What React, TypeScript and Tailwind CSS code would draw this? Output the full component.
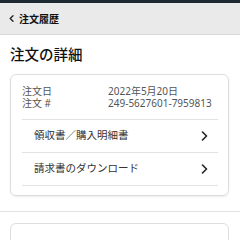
import React from "react";

function ChevronRight() {
  return (
    <svg width="7" height="10" viewBox="0 0 7 10" fill="none">
      <path d="M1.5 1 L5.5 5 L1.5 9" stroke="#222" strokeWidth="1.6" strokeLinecap="round" strokeLinejoin="round" />
    </svg>
  );
}

export default function App() {
  return (
    <div
      className="w-[240px] h-[240px] overflow-hidden bg-white"
      style={{ fontFamily: '"Noto Sans", "Noto Sans CJK JP", sans-serif' }}
    >
      <div className="h-[3px] bg-[#1f2b33]" />
      <div className="h-[32px] bg-[#eaeaea] border-b border-[#d8d8d8] flex items-center pl-[9px] gap-[5px]">
        <svg width="5" height="7" viewBox="0 0 5 7" fill="none">
          <path d="M4 0.8 L1.2 3.5 L4 6.2" stroke="#222" strokeWidth="1.3" strokeLinecap="round" strokeLinejoin="round" />
        </svg>
        <span className="text-[10px] font-bold text-[#111] leading-none">注文履歴</span>
      </div>

      <h1 className="pt-[9px] pl-[10px] text-[14.5px] leading-[20px] font-medium text-[#111]">注文の詳細</h1>

      <div className="mt-[10px] ml-[10px] w-[219px] rounded-[6px] border border-[#dddddd] shadow-[0_1px_2px_rgba(0,0,0,0.08)] pt-[10px] pb-[9px] pl-[11px] pr-[10px]">
        <div className="grid grid-cols-[86px_1fr] text-[10px] leading-[12px] text-[#555]">
          <span>注文日</span>
          <span>2022年5月20日</span>
          <span>注文 #</span>
          <span>249-5627601-7959813</span>
        </div>
        <div className="mt-[10px] border-t border-[#e3e3e3]">
          <div className="h-[33px] flex items-center justify-between pl-[12px] pr-[10px] border-b border-[#e3e3e3]">
            <span className="text-[10.5px] text-[#333]">領収書／購入明細書</span>
            <ChevronRight />
          </div>
          <div className="h-[33px] flex items-center justify-between pl-[12px] pr-[10px] border-b border-[#e3e3e3]">
            <span className="text-[10.5px] text-[#333]">請求書のダウンロード</span>
            <ChevronRight />
          </div>
        </div>
      </div>

      <div className="mt-[15px] h-[1px] bg-[#e2e2e2]" />

      <div className="mt-[11px] ml-[10px] w-[219px] h-[40px] rounded-[6px] border border-[#dddddd]" />
    </div>
  );
}
